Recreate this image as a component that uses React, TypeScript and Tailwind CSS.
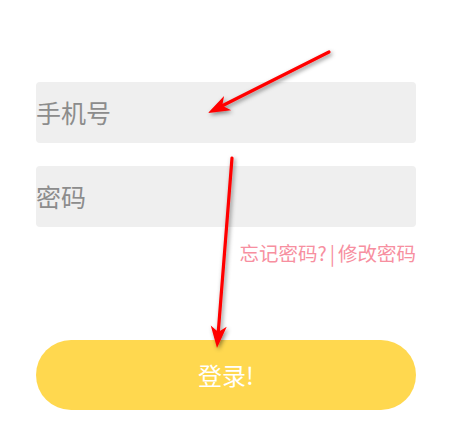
import React from 'react'

const cjk = { fontFamily: '"Noto Sans CJK SC", "Noto Sans", sans-serif' }

function Arrow({ x1, y1, x2, y2 }: { x1: number; y1: number; x2: number; y2: number }) {
    // arrow head with a notched back, pointing from (x1,y1) to (x2,y2)
    const dx = x2 - x1
    const dy = y2 - y1
    const len = Math.hypot(dx, dy)
    const ux = dx / len
    const uy = dy / len
    const px = -uy
    const py = ux
    const headLen = 22
    const headW = 8
    const notch = 16
    const bx = x2 - ux * headLen
    const by = y2 - uy * headLen
    const nx = x2 - ux * notch
    const ny = y2 - uy * notch
    const head = `${x2},${y2} ${bx + px * headW},${by + py * headW} ${nx},${ny} ${bx - px * headW},${by - py * headW}`
    return (
        <g>
            <line x1={x1} y1={y1} x2={nx} y2={ny} stroke="#ff0000" strokeWidth={3.2} strokeLinecap="round" />
            <polygon points={head} fill="#ff0000" />
        </g>
    )
}

export default function App() {
    return (
        <div className="relative w-[456px] h-[424px] bg-white overflow-hidden" style={cjk}>
            <div className="pl-9 pr-10 pt-[82px] flex flex-col">
                <div className="h-[61px] rounded-[4px] bg-[#efefef] flex items-center">
                    <span className="text-[25px] text-[#8c8c8c] leading-none">手机号</span>
                </div>
                <div className="h-[61px] mt-[23px] rounded-[4px] bg-[#efefef] flex items-center">
                    <span className="text-[25px] text-[#8c8c8c] leading-none">密码</span>
                </div>
                <div className="mt-[16px] flex justify-end text-[19.5px] leading-none text-[#f78fa0]">
                    <span>忘记密码?</span>
                    <span className="mx-[3px]">|</span>
                    <span>修改密码</span>
                </div>
                <button className="mt-[77px] h-[70px] rounded-full bg-[#ffd84f] text-white text-[24px] flex items-center justify-center">
                    登录!
                </button>
            </div>
            <svg className="absolute inset-0 pointer-events-none" width="456" height="424">
                <defs>
                    <filter id="sh" x="-20%" y="-20%" width="140%" height="140%">
                        <feDropShadow dx="1.5" dy="2" stdDeviation="2" floodColor="#000" floodOpacity="0.45" />
                    </filter>
                </defs>
                <g filter="url(#sh)">
                    <Arrow x1={329} y1={52} x2={208} y2={113} />
                    <Arrow x1={232} y1={158} x2={217} y2={348} />
                </g>
            </svg>
        </div>
    )
}
